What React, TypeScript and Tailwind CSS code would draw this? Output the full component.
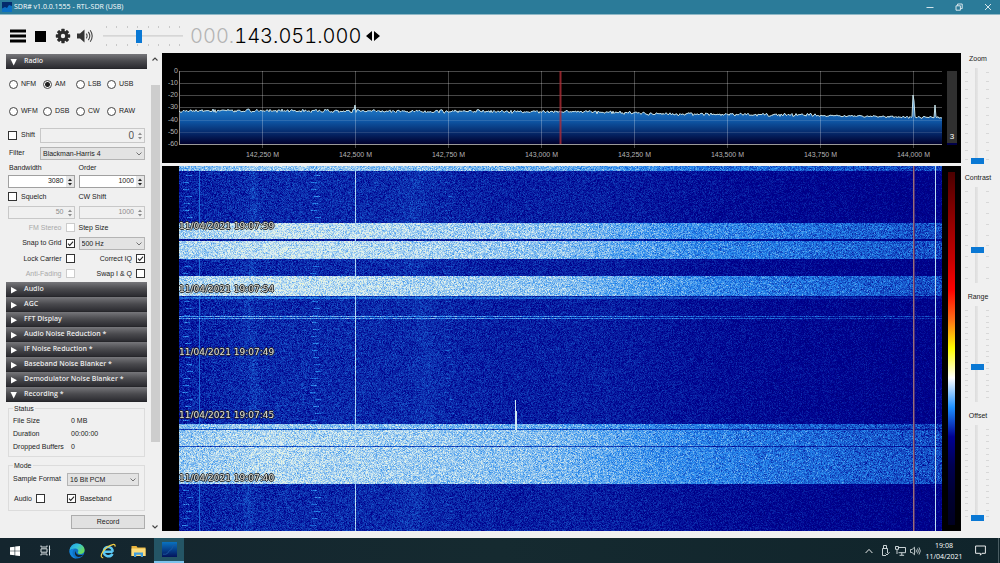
import React, { useEffect, useMemo, useRef, useState } from 'react';

const PLOT_WIDTH = 763;
const WATERFALL_HEIGHT = 365;

// Palette from noise floor to strongest signal
const PALETTE = [
  [0, 0, 32],
  [0, 0, 48],
  [0, 0, 80],
  [0, 0, 140],
  [36, 134, 236],
  [226, 242, 240],
  [246, 246, 130],
  [254, 109, 22],
  [255, 0, 0],
  [198, 0, 0],
  [159, 0, 0],
  [117, 0, 0],
  [74, 0, 0],
];

const FREQUENCIES = [
  '142,250 M',
  '142,500 M',
  '142,750 M',
  '143,000 M',
  '143,250 M',
  '143,500 M',
  '143,750 M',
  '144,000 M',
];

const frequencyX = (index: number) => `${((83.5 + 93 * index) / PLOT_WIDTH) * 100}%`;

const createRandom = (seed: number) => {
  let state = seed;
  return () => {
    state = (state * 1664525 + 1013904223) >>> 0;
    return state / 4294967296;
  };
};

const interpolate = (points: number[][], x: number) => {
  for (let i = 1; i < points.length; i++) {
    if (x <= points[i][0]) {
      const [x0, y0] = points[i - 1];
      const [x1, y1] = points[i];
      return y0 + ((y1 - y0) * (x - x0)) / (x1 - x0);
    }
  }
  return points[points.length - 1][1];
};

const QUIET_LEVEL = [[0, 3.22], [60, 3.3], [240, 3.3], [330, 3.22], [420, 3.22], [540, 3.1], [763, 2.98]];
const BURST_LEVEL = [[0, 4.68], [90, 4.84], [180, 4.78], [300, 4.64], [380, 4.54], [440, 4.32], [520, 4.06], [620, 3.86], [700, 3.7], [763, 3.55]];

// How much of the burst level a waterfall row carries
const burstAmount = (y: number) => {
  if (y < 5) return 0.85;
  if (y >= 57 && y < 93) return y === 73 || y === 74 ? -0.08 : 1;
  if (y >= 110 && y < 130) return 1;
  if (y === 130) return 0.05;
  if (y === 131 || y === 132) return 0.35;
  if (y === 150 || y === 152) return 0.62;
  if (y >= 258 && y < 318) {
    if (y === 263 || y === 280) return 0.2;
    return y < 263 ? 0.85 : 0.95;
  }
  return 0;
};

const Waterfall: React.FC = () => {
  const canvasRef = useRef<HTMLCanvasElement>(null);

  useEffect(() => {
    const context = canvasRef.current?.getContext('2d');
    if (!context) return;

    const random = createRandom(1555);
    const image = context.createImageData(PLOT_WIDTH, WATERFALL_HEIGHT);

    for (let y = 0; y < WATERFALL_HEIGHT; y++) {
      const amount = burstAmount(y);
      const pulse = y % 7 === 2;
      const pulseStart = 3 + Math.floor(random() * 6);
      for (let x = 0; x < PLOT_WIDTH; x++) {
        const quiet = interpolate(QUIET_LEVEL, x);
        const burst = interpolate(BURST_LEVEL, x);
        const noise = random() + random() + random() - 1.5;
        let level = quiet + (burst - quiet) * amount + noise * (amount > 0.5 ? 0.44 : 0.36 - x / 5000);

        if (amount === 0) {
          // Faint drifting carriers
          level += 0.13 * Math.exp(-(((x - 72 - 3 * Math.sin(y / 30)) / 5) ** 2));
          level += 0.07 * Math.exp(-(((x - 240 + 8 * Math.sin(y / 45)) / 12) ** 2));
          if (pulse && x >= pulseStart && x < pulseStart + 6) level += 0.65;
          if (pulse && x >= pulseStart + 128 && x < pulseStart + 134) level += 0.6;
          if (pulse && x >= pulseStart + 262 && x < pulseStart + 267) level += 0.3;
        }
        if (x === 20) level = Math.max(level, 3.8);
        if (x === 176) level = Math.max(level, 4.72 + noise * 0.2);
        if (x === 756) level = Math.max(level, 4.8);
        if ((x === 336 || (x === 337 && y > 244)) && y > 233 && y < 264) level = 4.9;

        const clamped = Math.max(2.7, Math.min(5.3, level));
        const stop = Math.floor(clamped);
        const mix = clamped - stop;
        const offset = (y * PLOT_WIDTH + x) * 4;
        for (let channel = 0; channel < 3; channel++) {
          image.data[offset + channel] =
            PALETTE[stop][channel] + (PALETTE[stop + 1][channel] - PALETTE[stop][channel]) * mix;
        }
        if (x === 734 || x === 735) {
          image.data[offset] = x === 734 ? 155 : 75;
          image.data[offset + 1] = x === 734 ? 112 : 45;
          image.data[offset + 2] = x === 734 ? 120 : 125;
        }
        image.data[offset + 3] = 255;
      }
    }
    context.putImageData(image, 0, 0);
  }, []);

  return (
    <section className="relative flex flex-1 bg-black pl-[17px]">
      <div className="relative min-h-[360px] flex-1">
        <canvas
          ref={canvasRef}
          width={PLOT_WIDTH}
          height={WATERFALL_HEIGHT}
          className="absolute inset-0 h-full w-full"
        />
        <div className="absolute inset-0 flex flex-col gap-[50px] pt-[54px] font-['DejaVu_Sans',sans-serif] text-[9px] leading-[13px] text-[#e0e0d8] [text-shadow:1px_0_#222,-1px_0_#222,0_1px_#222,0_-1px_#222]">
          <span>11/04/2021 19:07:59</span>
          <span>11/04/2021 19:07:54</span>
          <span>11/04/2021 19:07:49</span>
          <span>11/04/2021 19:07:45</span>
          <span>11/04/2021 19:07:40</span>
        </div>
      </div>
      <div className="flex w-[19px] px-1.5 py-1.5">
        <div className="w-full bg-[linear-gradient(to_top,#000020,#000030,#000050,#000091,#1e90ff,#ffffff,#ffff00,#fe6d16,#ff0000,#c60000,#9f0000,#750000,#4a0000)]" />
      </div>
    </section>
  );
};

const Spectrum: React.FC = () => {
  const trace = useMemo(() => {
    const random = createRandom(143051);
    const points: string[] = [];
    for (let x = 0; x <= PLOT_WIDTH; x++) {
      let y = interpolate([[0, 41], [20, 40], [400, 41], [480, 43], [660, 45], [763, 47]], x);
      y -= (random() + random() - 0.8) * (x > 640 ? 1.2 : 2);
      if (x === 176) y = 34;
      if (x === 734 || x === 735) y = x === 734 ? 24 : 30;
      if (x === 756) y = 34;
      points.push(`${x},${y.toFixed(1)}`);
    }
    return points.join(' L');
  }, []);

  return (
    <section className="flex h-[110px] bg-black font-['Liberation_Sans',Arial,sans-serif] text-[7px] text-[#b4b4b4]">
      <div className="mt-3 flex h-[85px] w-[17px] flex-col justify-between pr-px text-right leading-3">
        {['0', '-10', '-20', '-30', '-40', '-50', '-60'].map((label) => (
          <span key={label}>{label}</span>
        ))}
      </div>
      <div className="flex-1 pt-[18px]">
        <svg width="100%" height="74" className="block overflow-visible">
          <defs>
            <linearGradient id="spectrum-fill" gradientUnits="userSpaceOnUse" x1="0" y1="38" x2="0" y2="73">
              <stop offset="0" stopColor="#1f76c4" />
              <stop offset="0.35" stopColor="#0e55a4" />
              <stop offset="0.75" stopColor="#04205e" />
              <stop offset="1" stopColor="#00002c" />
            </linearGradient>
          </defs>
          <svg width="100%" height="73" viewBox={`0 0 ${PLOT_WIDTH} 73`} preserveAspectRatio="none">
            <path d={`M0,73 L${trace} L${PLOT_WIDTH},73 Z`} fill="url(#spectrum-fill)" />
          </svg>
          {[0.5, 12.5, 24.5, 36.5, 49.5, 61.5].map((y) => (
            <line key={y} x1="0" x2="100%" y1={y} y2={y} stroke="#ffffff" strokeOpacity={y > 40 ? 0.12 : 0.28} />
          ))}
          <line x1="0.5" x2="0.5" y1="0" y2="73" stroke="#8c8c8c" />
          <line x1="0" x2="100%" y1="73.5" y2="73.5" stroke="#9a9a9a" />
          {FREQUENCIES.map((frequency, index) => (
            <g key={frequency}>
              <line x1={frequencyX(index)} x2={frequencyX(index)} y1="0" y2="77" stroke="#ffffff" strokeOpacity="0.26" />
              <text x={frequencyX(index)} y="86" textAnchor="middle" fill="#b4b4b4">
                {frequency}
              </text>
            </g>
          ))}
          <svg width="100%" height="73" viewBox={`0 0 ${PLOT_WIDTH} 73`} preserveAspectRatio="none">
            <path d={`M${trace}`} fill="none" stroke="#c8e2e8" strokeWidth="1" vectorEffect="non-scaling-stroke" />
          </svg>
          <line x1="50%" x2="50%" y1="0" y2="73" stroke="#b02c34" strokeWidth="2" strokeOpacity="0.8" />
        </svg>
      </div>
      <div className="w-[19px] pt-[18px] pr-1 pl-[5px]">
        <div className="flex h-[74px] items-end justify-center border-b-2 border-[#00004a] bg-[#303030] text-[8px] leading-3 text-white">
          3
        </div>
      </div>
    </section>
  );
};

interface CheckProps {
  label: string;
  checked?: boolean;
  disabled?: boolean;
  boxFirst?: boolean;
}

const Check: React.FC<CheckProps> = ({ label, checked = false, disabled = false, boxFirst = false }) => (
  <label
    className={`flex items-center gap-1 whitespace-nowrap ${boxFirst ? 'flex-row-reverse justify-end' : 'justify-end'} ${
      disabled ? 'text-[#a9a9a9]' : ''
    }`}
  >
    {label}
    <span className="relative flex">
      <input
        type="checkbox"
        defaultChecked={checked}
        disabled={disabled}
        className="peer size-[9px] appearance-none border border-[#333] bg-white disabled:border-[#ccc]"
      />
      <svg viewBox="0 0 8 8" className="pointer-events-none absolute inset-0 hidden size-[9px] peer-checked:block">
        <path d="M1.8 4.1 3.3 5.7 6.3 2.3" fill="none" stroke="#222" strokeWidth="0.9" />
      </svg>
    </span>
  </label>
);

interface SpinnerProps {
  label: string;
  value: number;
  disabled?: boolean;
  large?: boolean;
}

const Spinner: React.FC<SpinnerProps> = ({ label, value, disabled = false, large = false }) => (
  <div
    className={`flex min-w-0 items-stretch border ${large ? 'h-[15px]' : 'h-[13px]'} ${
      disabled ? 'border-[#c8c8c8] bg-[#f0f0f0] text-[#8c8c8c]' : 'border-[#a0a0a0] bg-white'
    }`}
  >
    <input
      type="text"
      inputMode="numeric"
      aria-label={label}
      defaultValue={value}
      disabled={disabled}
      className={`w-0 flex-1 pr-0.5 text-right outline-none ${large ? 'text-[10px] text-[#555]' : ''}`}
    />
    <div className={`flex w-2 flex-col items-center justify-center gap-0.5 ${disabled ? '' : 'bg-[#e6e6e6]'}`}>
      <button type="button" aria-label={`Increase ${label}`} disabled={disabled}>
        <svg viewBox="0 0 6 3" className="block h-[3px] w-1.5">
          <path d="M1 3 3 0.4 5 3Z" fill={disabled ? '#8c8c8c' : '#222'} />
        </svg>
      </button>
      <button type="button" aria-label={`Decrease ${label}`} disabled={disabled}>
        <svg viewBox="0 0 6 3" className="block h-[3px] w-1.5">
          <path d="M1 0 3 2.6 5 0Z" fill={disabled ? '#8c8c8c' : '#222'} />
        </svg>
      </button>
    </div>
  </div>
);

const Dropdown: React.FC<{ id: string; label?: string; value: string }> = ({ id, label, value }) => (
  <div className="relative min-w-0">
    <select
      id={id}
      aria-label={label}
      className="block h-[13px] w-full appearance-none border border-[#b4b4b4] bg-[#e3e3e3] pl-0.5 leading-[11px] outline-none"
    >
      <option>{value}</option>
    </select>
    <svg viewBox="0 0 6 4" className="pointer-events-none absolute top-[5px] right-[3px] h-1 w-1.5">
      <path d="M0.5 0.5 3 3 5.5 0.5" fill="none" stroke="#555" strokeWidth="0.8" />
    </svg>
  </div>
);

const SectionHeader: React.FC<{ title: string; open?: boolean }> = ({ title, open = false }) => (
  <button
    type="button"
    aria-expanded={open}
    className="flex h-[15px] w-full items-center gap-1.5 border-b border-[#26262a] bg-linear-to-b from-[#77777b] via-[#4a4a4e] to-[#2c2c31] pl-1 text-left font-['Open_Sans',sans-serif] text-[7px] leading-[14px] font-semibold text-[#ececec]"
  >
    <svg viewBox="0 0 8 8" className="mt-0.5 size-2 fill-white">
      {open ? <path d="M0.5 1h6.4L3.7 7.6Z" /> : <path d="M1 1v6.4L7 4.2Z" />}
    </svg>
    {title}
  </button>
);

const MODES = ['NFM', 'AM', 'LSB', 'USB', 'WFM', 'DSB', 'CW', 'RAW'];

const RadioSection: React.FC = () => {
  const [mode, setMode] = useState('AM');

  return (
    <div>
      <SectionHeader title="Radio" open />
      <div className="grid grid-cols-[34px_33px_31px_1fr] gap-y-[13px] pt-2 pl-[3px]">
        {MODES.map((name) => (
          <label key={name} className="flex h-[14px] items-center gap-[3px]">
            <input
              type="radio"
              name="mode"
              value={name}
              checked={mode === name}
              onChange={() => setMode(name)}
              className="size-[9px] shrink-0 appearance-none rounded-full border border-[#444] bg-white checked:bg-[radial-gradient(circle,#222_0_2px,#fff_3px)]"
            />
            {name}
          </label>
        ))}
      </div>

      <div className="flex flex-col pr-0.5 pl-0.5">
        <div className="mt-2.5 grid grid-cols-[32px_1fr] items-center">
          <Check label="Shift" boxFirst />
          <Spinner label="Shift frequency" value={0} disabled large />
        </div>
        <div className="mt-1 grid grid-cols-[32px_1fr] items-center">
          <label htmlFor="filter" className="pl-px">Filter</label>
          <Dropdown id="filter" value="Blackman-Harris 4" />
        </div>
        <div className="mt-0.5 grid grid-cols-2 gap-x-1 leading-[11px]">
          <span className="pl-px">Bandwidth</span>
          <span>Order</span>
        </div>
        <div className="mt-0.5 grid grid-cols-2 gap-x-1">
          <Spinner label="Bandwidth" value={3080} />
          <Spinner label="Order" value={1000} />
        </div>
        <div className="mt-[3px] grid grid-cols-2 items-center gap-x-1 leading-[11px]">
          <Check label="Squelch" boxFirst />
          <span>CW Shift</span>
        </div>
        <div className="mt-1 grid grid-cols-2 gap-x-1">
          <Spinner label="Squelch level" value={50} disabled />
          <Spinner label="CW Shift" value={1000} disabled />
        </div>
        <div className="mt-[3px] grid grid-cols-2 items-center gap-x-1 leading-[11px]">
          <Check label="FM Stereo" disabled />
          <label htmlFor="step-size">Step Size</label>
        </div>
        <div className="mt-1 grid grid-cols-2 items-center gap-x-1">
          <Check label="Snap to Grid" checked />
          <Dropdown id="step-size" value="500 Hz" />
        </div>
        <div className="mt-[3px] mb-[3px] grid grid-cols-2 gap-x-1 gap-y-1 leading-[11px]">
          <Check label="Lock Carrier" />
          <Check label="Correct IQ" checked />
          <Check label="Anti-Fading" disabled />
          <Check label="Swap I & Q" />
        </div>
      </div>
    </div>
  );
};

const RecordingSection: React.FC = () => (
  <div>
    <SectionHeader title="Recording *" open />
    <div className="flex flex-col px-0.5 pt-px">
      <fieldset className="border border-[#dcdcdc] px-1 pb-[3px]">
        <legend className="px-px leading-[11px]">Status</legend>
        <dl className="grid grid-cols-[58px_1fr] leading-[13px]">
          <dt>File Size</dt>
          <dd>0 MB</dd>
          <dt>Duration</dt>
          <dd>00:00:00</dd>
          <dt>Dropped Buffers</dt>
          <dd>0</dd>
        </dl>
      </fieldset>
      <fieldset className="mt-[3px] border border-[#dcdcdc] px-1 pb-1.5">
        <legend className="px-px leading-[11px]">Mode</legend>
        <div className="mt-0.5 grid grid-cols-[54px_1fr] items-center pr-px">
          <label htmlFor="sample-format">Sample Format</label>
          <Dropdown id="sample-format" value="16 Bit PCM" />
        </div>
        <div className="mt-[7px] grid grid-cols-[54px_1fr] items-center leading-[11px]">
          <div className="flex pl-px">
            <Check label="Audio" />
          </div>
          <Check label="Baseband" checked boxFirst />
        </div>
      </fieldset>
      <button
        type="button"
        className="mt-1 ml-auto h-[14px] w-[74px] border border-[#adadad] bg-[#e1e1e1] leading-3"
      >
        Record
      </button>
    </div>
  </div>
);

interface DisplaySliderProps {
  label: string;
  value: number;
  ticks: number;
}

const TickColumn: React.FC<{ count: number }> = ({ count }) => (
  <div className="flex flex-col justify-between py-1">
    {Array.from({ length: count }, (_, index) => (
      <span key={index} className="h-px w-[3px] bg-[#d8d8d8]" />
    ))}
  </div>
);

const DisplaySlider: React.FC<DisplaySliderProps> = ({ label, value, ticks }) => (
  <label className="flex h-[119px] flex-col items-center">
    <span className="leading-[11px]">{label}</span>
    <span className="mt-1 flex h-24 gap-[2px] pr-0.5">
      <TickColumn count={ticks} />
      <input
        type="range"
        defaultValue={value}
        className="h-24 w-[14px] appearance-none bg-[linear-gradient(to_right,transparent_5px,#dcdcdc_5px,#e6e6e6_8px,transparent_8px)] [direction:rtl] [writing-mode:vertical-lr] [&::-webkit-slider-thumb]:h-1.5 [&::-webkit-slider-thumb]:w-[13px] [&::-webkit-slider-thumb]:appearance-none [&::-webkit-slider-thumb]:bg-[#0a78d4]"
      />
      <TickColumn count={ticks} />
    </span>
  </label>
);

const TitleBar: React.FC = () => (
  <header className="flex h-[14px] items-center bg-[#2b7b99] pr-2 pl-0.5 font-['Open_Sans',sans-serif] text-[7px] text-white">
    <svg viewBox="0 0 10 10" className="mr-0.5 size-2.5">
      <rect width="10" height="10" fill="#032a6c" />
      <path d="M0 6.5 3 5l2 1 2-3 3 1v6H0Z" fill="#0b6fc4" />
    </svg>
    <h1>SDR# v1.0.0.1555 - RTL-SDR (USB)</h1>
    <div className="ml-auto flex items-center gap-[21px]">
      <button type="button" aria-label="Minimize">
        <svg viewBox="0 0 8 8" className="size-2 stroke-white">
          <path d="M0.5 4.5h7" strokeWidth="0.8" />
        </svg>
      </button>
      <button type="button" aria-label="Restore">
        <svg viewBox="0 0 8 8" className="size-2 fill-none stroke-white">
          <path d="M1 2.8h4.4v4.4H1ZM2.6 2.6V1h4.6v4.6H5.6" strokeWidth="0.8" />
        </svg>
      </button>
      <button type="button" aria-label="Close">
        <svg viewBox="0 0 8 8" className="size-2 stroke-white">
          <path d="m1 1 6 6M7 1 1 7" strokeWidth="0.8" />
        </svg>
      </button>
    </div>
  </header>
);

const Toolbar: React.FC = () => (
  <div className="flex h-[39px] items-center border-t border-[#8fb8c6] pt-1 pl-2.5">
    <button type="button" aria-label="Menu">
      <svg viewBox="0 0 16 14" className="h-[14px] w-4">
        <path d="M0 0.5h16v3H0ZM0 5.5h16v3H0ZM0 10.5h16v3H0Z" />
      </svg>
    </button>
    <button type="button" aria-label="Stop" className="ml-[9px] size-[11px] bg-black" />
    <button type="button" aria-label="Configure" className="ml-[9px]">
      <svg viewBox="0 0 16 16" className="size-4">
        <g fill="#2b2b2b">
          {[0, 45, 90, 135].map((angle) => (
            <rect key={angle} x="6.3" y="0.8" width="3.4" height="14.4" rx="0.6" transform={`rotate(${angle} 8 8)`} />
          ))}
          <circle cx="8" cy="8" r="5.2" />
        </g>
        <circle cx="8" cy="8" r="2.2" fill="#f0f0f0" />
      </svg>
    </button>
    <button type="button" aria-label="Mute" className="ml-1.5">
      <svg viewBox="0 0 16 14" className="h-[14px] w-4">
        <path d="M0 4.5h3L7.5 0.5v13L3 9.5H0Z" fill="#333" />
        <path d="M9.3 4.6q1.6 2.4 0 4.8M11.3 2.9q3 4.1 0 8.2M13.2 1.2q4 5.8 0 11.6" fill="none" stroke="#444" strokeWidth="1.1" />
      </svg>
    </button>
    <div className="ml-2.5 flex w-20 flex-col gap-px">
      <div className="flex justify-between px-[3px]">
        {Array.from({ length: 8 }, (_, index) => (
          <span key={index} className="h-0.5 w-px bg-[#c8c8c8]" />
        ))}
      </div>
      <input
        type="range"
        aria-label="Volume"
        defaultValue={45}
        className="h-[14px] w-full appearance-none bg-[linear-gradient(to_bottom,transparent_6px,#d2d2d2_6px,#e2e2e2_8px,transparent_8px)] [&::-webkit-slider-thumb]:h-[13px] [&::-webkit-slider-thumb]:w-1.5 [&::-webkit-slider-thumb]:appearance-none [&::-webkit-slider-thumb]:bg-[#0a78d4]"
      />
      <div className="flex justify-between px-[3px]">
        {Array.from({ length: 8 }, (_, index) => (
          <span key={index} className="h-0.5 w-px bg-[#c8c8c8]" />
        ))}
      </div>
    </div>
    <output className="ml-[7px] font-['Inter',sans-serif] text-[20px] leading-5 font-light tabular-nums">
      <span className="text-[#b4b4b4]">000.</span>
      <span className="text-black">143.051.000</span>
    </output>
    <button type="button" aria-label="Tuning style" className="ml-1">
      <svg viewBox="0 0 16 10" className="h-2.5 w-4">
        <path d="M7 0v10L1 5ZM9 0v10l6-5Z" />
      </svg>
    </button>
  </div>
);

const Taskbar: React.FC = () => (
  <footer className="flex h-[25px] items-center bg-linear-to-r from-[#14252e] via-[#152a30] to-[#10242b] font-['Open_Sans',sans-serif] text-[7px] text-white">
    <nav className="flex h-full items-center pl-2.5">
      <button type="button" aria-label="Start">
        <svg viewBox="0 0 10 10" className="size-2.5 fill-white">
          <path d="M0 1.3 4.6 0.7v4H0ZM5.2 0.6 10 0v4.7H5.2ZM0 5.3h4.6v4L0 8.7ZM5.2 5.3H10V10l-4.8-0.6Z" />
        </svg>
      </button>
      <button type="button" aria-label="Task view" className="ml-5">
        <svg viewBox="0 0 11 11" className="size-[11px] fill-none stroke-[#d8e0e2]">
          <path d="M1 0.5v1.5h6V0.5M1 10.5V9h6v1.5M1 3.8h6v3.4H1ZM9.5 0.5v10M8.9 4.5h1.3" />
        </svg>
      </button>
      <button type="button" aria-label="Edge" className="ml-[18px]">
        <svg viewBox="0 0 16 16" className="size-4">
          <defs>
            <linearGradient id="edge-top" x1="0" y1="0" x2="1" y2="0.6">
              <stop offset="0" stopColor="#1f9be0" />
              <stop offset="0.5" stopColor="#35c1d8" />
              <stop offset="1" stopColor="#6bdc5a" />
            </linearGradient>
          </defs>
          <circle cx="8" cy="8" r="7.6" fill="#0f6fc4" />
          <path d="M0.5 7.5C1 3 4.2 0.4 8 0.4c4.5 0 7.6 3.2 7.6 6.5 0 2.6-2 4-4.2 4-1.9 0-2.9-0.8-2.6-1.4 1.2-1.7 0.3-4-2.7-4-3 0-5 1.5-5.6 2Z" fill="url(#edge-top)" />
          <path d="M6.3 8c-1.5 3.6 1.4 6.7 4.7 5.8 1.3-0.3 2.7-1.3 3.4-2.3-1.6 1-7.4 1.3-8.1-3.5Z" fill="#14252e" />
          <path d="M5 6.2C2 9 4 14 8 15.6 3.4 15.8 0.3 12 0.5 7.7 1.8 6.5 3.5 5.9 5 6.2Z" fill="#1286dc" />
        </svg>
      </button>
      <button type="button" aria-label="Internet Explorer" className="ml-[15px]">
        <svg viewBox="0 0 16 16" className="size-4 fill-none">
          <path d="M12.7 8.8H4M12.7 8.8c0-6.4-8.7-6.4-8.9-0.4-0.1 5.7 7 6.3 8.6 2.3" stroke="#5cc8f4" strokeWidth="2.5" />
          <path d="M3.2 14.8c-4-0.2-1.4-6.4 3.6-10.2C11 1.4 15.8 0 15 3.6" stroke="#f4cf45" strokeWidth="1.2" />
        </svg>
      </button>
      <button type="button" aria-label="File Explorer" className="ml-[15px]">
        <svg viewBox="0 0 15 12" className="h-3 w-[15px]">
          <path d="M0.5 1h5l1 1.5h8V11h-14Z" fill="#e8b33c" />
          <path d="M0.5 3.5h14V11h-14Z" fill="#fbdc7c" />
          <path d="M3 12V7.5h9V12h-2.2V9.7H5.2V12Z" fill="#3f9ddd" />
        </svg>
      </button>
      <button
        type="button"
        aria-label="SDR#"
        className="ml-2 flex h-[25px] w-[30px] items-center justify-center border-b-2 border-[#7cc3ec] bg-[#245565]"
      >
        <svg viewBox="0 0 16 16" className="size-[15px]">
          <defs>
            <linearGradient id="sdr-icon" x1="0" y1="0" x2="0" y2="1">
              <stop offset="0" stopColor="#0a72c0" />
              <stop offset="1" stopColor="#03145c" />
            </linearGradient>
          </defs>
          <rect width="16" height="16" fill="url(#sdr-icon)" />
          <path d="M1 13h3q2 0 4-4l2-1 2-4 3-1" fill="none" stroke="#1c58a0" />
        </svg>
      </button>
    </nav>
    <div className="ml-auto flex h-full items-center">
      <svg viewBox="0 0 8 6" className="h-1.5 w-2 fill-none stroke-white">
        <path d="m0.6 5 3.4-3.6L7.4 5" strokeWidth="0.9" />
      </svg>
      <svg viewBox="0 0 9 11" className="ml-2 h-[11px] w-[9px] fill-none stroke-[#dde4e6]">
        <path d="M2.5 3.5v-3h3v3M1.5 3.5h5V8M1.5 3.5v7H5M4.5 8.5 6 10l2.5-2.800" strokeWidth="0.9" />
      </svg>
      <svg viewBox="0 0 11 10" className="ml-[5px] h-2.5 w-[11px] fill-none stroke-[#dde4e6]">
        <path d="M3 1.5h7.5v5.2H3.5M6.8 6.7v2.3M4.5 9.3h4.6M0.5 0.5h3v2.8h-3ZM2 3.3V8" strokeWidth="0.9" />
      </svg>
      <svg viewBox="0 0 11 10" className="ml-1 h-2.5 w-[11px] fill-none stroke-[#dde4e6]">
        <path d="M0.5 3.5H2l2.5-2.3v7.6L2 6.5H0.5ZM6 3.6q0.9 1.4 0 2.8M7.5 2.5q1.7 2.5 0 5M9 1.4q2.6 3.6 0 7.2" strokeWidth="0.8" />
      </svg>
      <time className="ml-1 w-[38px] text-center leading-[11px] whitespace-nowrap">
        <span className="block">19:08</span>
        <span className="block">11/04/2021</span>
      </time>
      <button type="button" aria-label="Notifications" className="ml-3">
        <svg viewBox="0 0 11 11" className="size-[11px] fill-none stroke-white">
          <path d="M0.6 1h9.8v7.3H7L5.4 10.2V8.3H0.6Z" strokeWidth="0.9" />
        </svg>
      </button>
      <span className="ml-3 h-full w-0.5 border-l border-[#4a5c62]" />
    </div>
  </footer>
);

const App: React.FC = () => (
  <div className="flex min-h-screen flex-col bg-[#f0f0f0] font-['Liberation_Sans',Arial,sans-serif] text-[7px] text-[#222]">
    <TitleBar />
    <Toolbar />
    <main className="flex flex-1 pb-[7px]">
      <aside className="flex w-[162px] shrink-0 gap-[3px] pt-px pr-0.5 pl-1.5">
        <div className="flex-1">
          <RadioSection />
          <SectionHeader title="Audio" />
          <SectionHeader title="AGC" />
          <SectionHeader title="FFT Display" />
          <SectionHeader title="Audio Noise Reduction *" />
          <SectionHeader title="IF Noise Reduction *" />
          <SectionHeader title="Baseband Noise Blanker *" />
          <SectionHeader title="Demodulator Noise Blanker *" />
          <RecordingSection />
        </div>
        <div className="flex w-2.5 flex-col items-center">
          <svg viewBox="0 0 6 4" className="mt-[3px] h-1 w-1.5">
            <path d="M0.5 3.5 3 1l2.5 2.5" fill="none" stroke="#444" strokeWidth="1.1" />
          </svg>
          <div className="mt-6 h-[357px] w-[9px] bg-[#cdcdcd]" />
          <svg viewBox="0 0 6 4" className="mt-auto mb-0.5 h-1 w-1.5">
            <path d="M0.5 0.5 3 3l2.5-2.5" fill="none" stroke="#444" strokeWidth="1.1" />
          </svg>
        </div>
      </aside>
      <div className="flex min-w-0 flex-1 flex-col gap-[3px]">
        <Spectrum />
        <Waterfall />
      </div>
      <aside className="flex w-[39px] shrink-0 flex-col pr-[5px]">
        <DisplaySlider label="Zoom" value={0} ticks={11} />
        <DisplaySlider label="Contrast" value={33} ticks={9} />
        <DisplaySlider label="Range" value={36} ticks={16} />
        <DisplaySlider label="Offset" value={0} ticks={15} />
      </aside>
    </main>
    <Taskbar />
  </div>
);

export default App;
